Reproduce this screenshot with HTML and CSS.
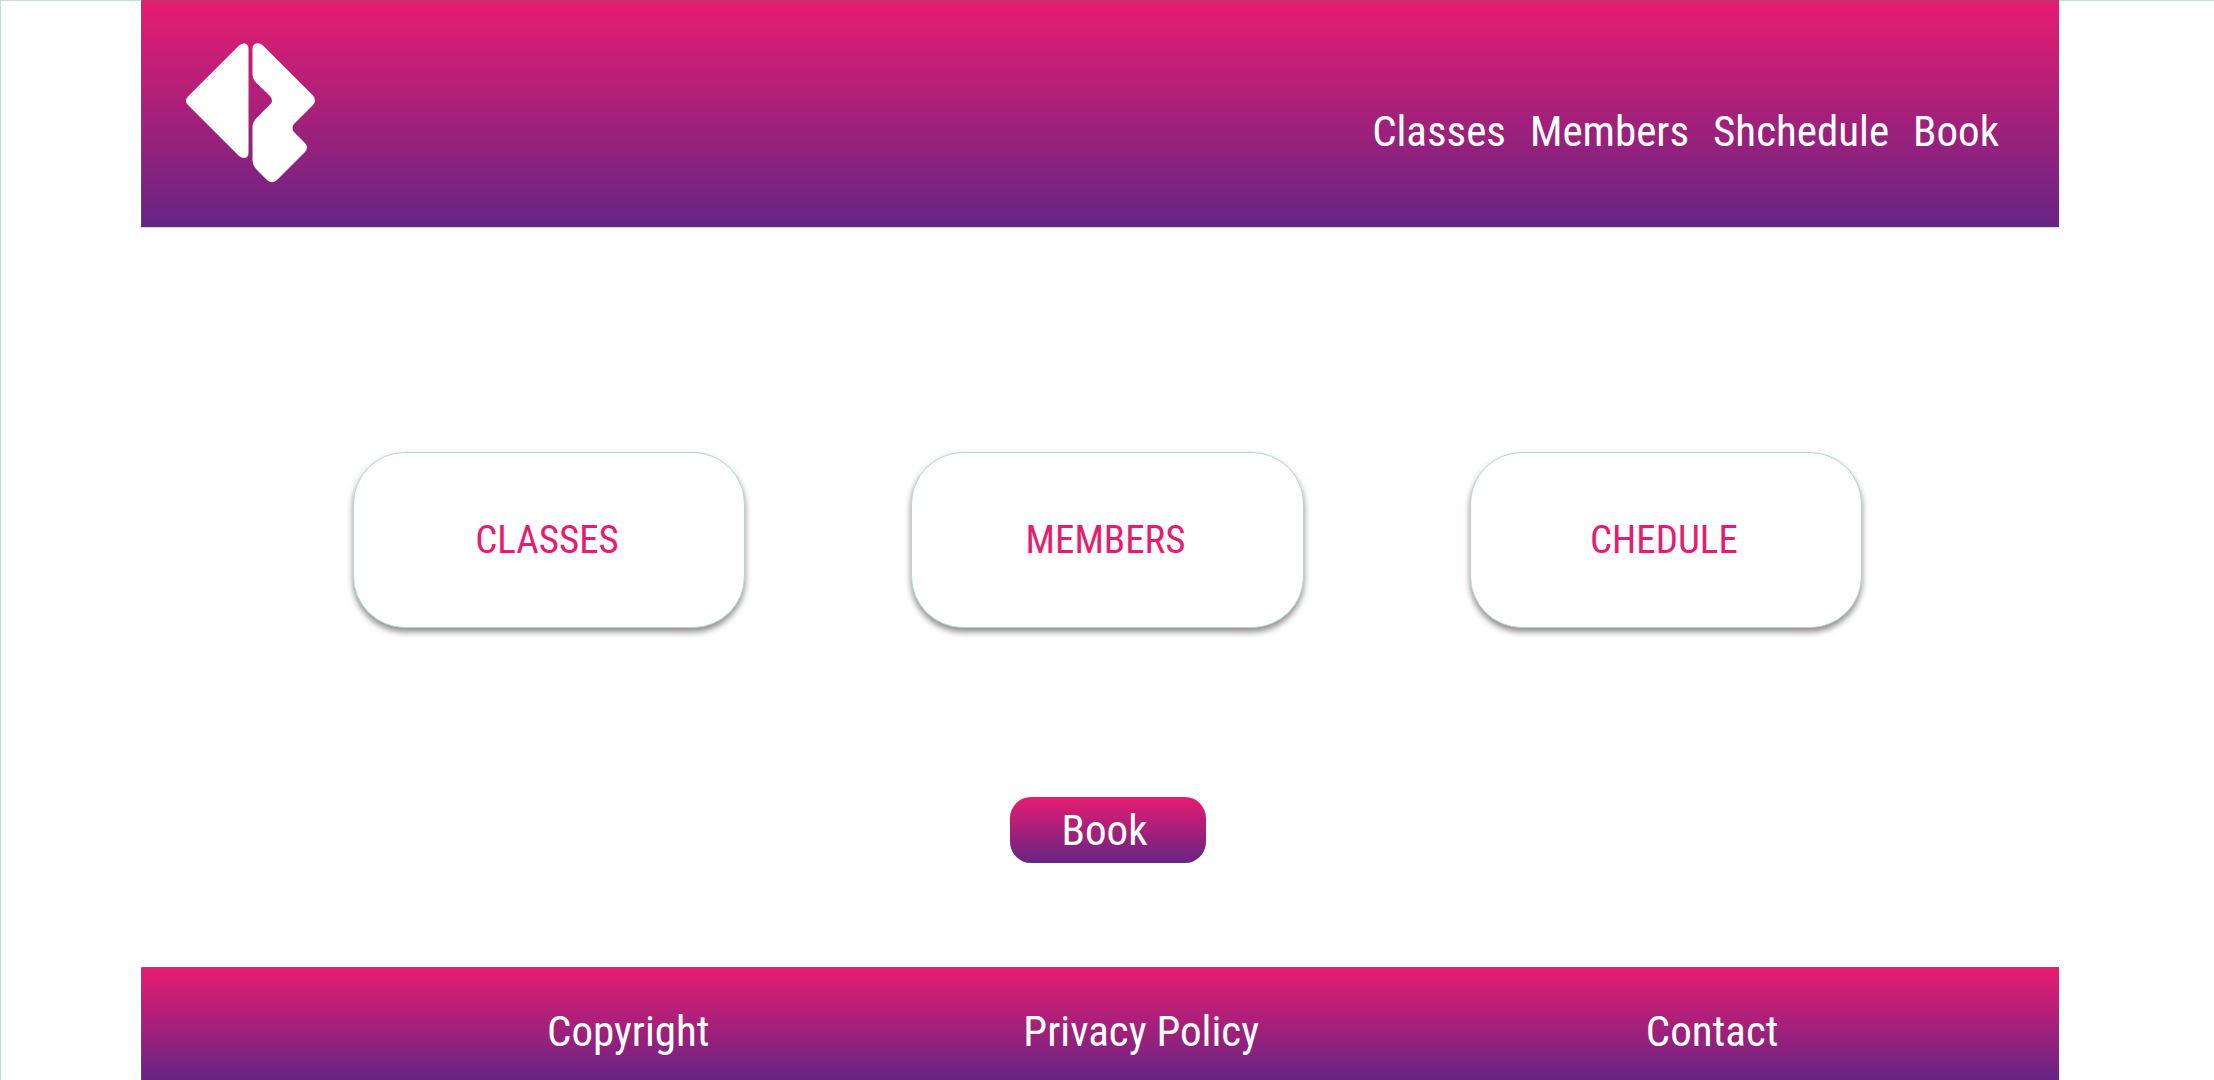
FILE: index.html
```html
<!DOCTYPE html>
<html lang="en">
<head>
<meta charset="utf-8">
<meta name="viewport" content="width=device-width, initial-scale=1">
<title>Classes</title>
<link rel="stylesheet" href="styles.css">
</head>
<body>
<div class="page">
  <header class="bar header">
    <a class="logo" href="#" aria-label="Home">
      <svg viewBox="0 0 130 140" width="130" height="140" fill="#fff" aria-hidden="true">
        <path d="M53 2.500Q56 0 59 .5Q62.500 1.500 62.500 6V109.500Q62.500 114 59 115Q56 115.500 53 113L2 62Q-2 57.500 2 53.500Z"/>
        <path d="M66.500 6Q66.500 1.500 70 .5Q74 -.5 77 2.500L127 52.500Q131 57.500 127 62L108 81Q105 85 108 89L119 100Q123 104.500 119 109L90.500 137.500Q86 141 81.500 137.500L71 127Q66.500 122.500 66.500 117.500V84Q66.500 79 71 74.500L84 61.500Q88 57.500 84 53L71 40.500Q66.500 36 66.500 32Z"/>
      </svg>
    </a>
    <nav class="nav">
      <a href="#">Classes</a>
      <a href="#">Members</a>
      <a href="#">Shchedule</a>
      <a href="#">Book</a>
    </nav>
  </header>
  <main class="main">
    <div class="cards">
      <a class="card" href="#">CLASSES</a>
      <a class="card" href="#">MEMBERS</a>
      <a class="card" href="#">CHEDULE</a>
    </div>
    <button class="book" type="button">Book</button>
  </main>
  <footer class="bar footer">
    <a href="#">Copyright</a>
    <a href="#">Privacy Policy</a>
    <a href="#">Contact</a>
  </footer>
</div>
</body>
</html>
```
FILE: styles.css
```css
* { box-sizing: border-box; }

body {
  margin: 0;
  background: #fff;
  color: #fff;
  font: 43px/56px "Roboto Condensed", "Liberation Sans Narrow", "Noto Sans CJK SC", sans-serif;
}

a { color: inherit; text-decoration: none; }

.page {
  display: flex;
  flex-direction: column;
  min-height: 100vh;
  border-left: 1px solid #b9e7cf;
  border-top: 1px solid #b9e7cf;
}

.bar {
  margin: 0 7% 0 140px;
  border-left: 1px solid rgba(80, 100, 120, .5);
  background: linear-gradient(#e71c71, #662483);
}

.header {
  display: flex;
  justify-content: space-between;
  align-items: flex-start;
  margin-top: -1px;
  padding: 42px 60px 44px 44px;
  border-top: 1px solid #a04468;
  border-bottom: 1px solid #dcd8e8;
}

.logo { display: block; }
.logo svg { display: block; }

.nav {
  display: flex;
  gap: 24px;
  padding-top: 60px;
}

.main {
  display: flex;
  flex: 1;
  flex-direction: column;
  align-items: center;
  padding: 224px 0 104px;
}

.cards {
  display: flex;
  justify-content: space-between;
  width: 68.2%;
}

.card {
  display: flex;
  align-items: center;
  justify-content: center;
  width: 26%;
  height: 176px;
  padding-right: 4px;
  border: 1px solid #b0dcc5;
  border-radius: 52px;
  background: #fff;
  box-shadow: 0 4px 6px rgba(0, 0, 0, .45);
  color: #e71c71;
  font-size: 39px;
}

.book {
  width: 196px;
  height: 66px;
  margin-top: 169px;
  padding: 0 6px 0 0;
  border: 0;
  border-radius: 21px;
  background: linear-gradient(#e71c71, #662483);
  color: #fff;
  font: inherit;
  cursor: pointer;
}

.footer {
  display: grid;
  grid-template-columns: 476fr 622fr 413fr;
  padding: 35px 0 21px 405px;
  border-top: 1px solid #a04468;
}
```
